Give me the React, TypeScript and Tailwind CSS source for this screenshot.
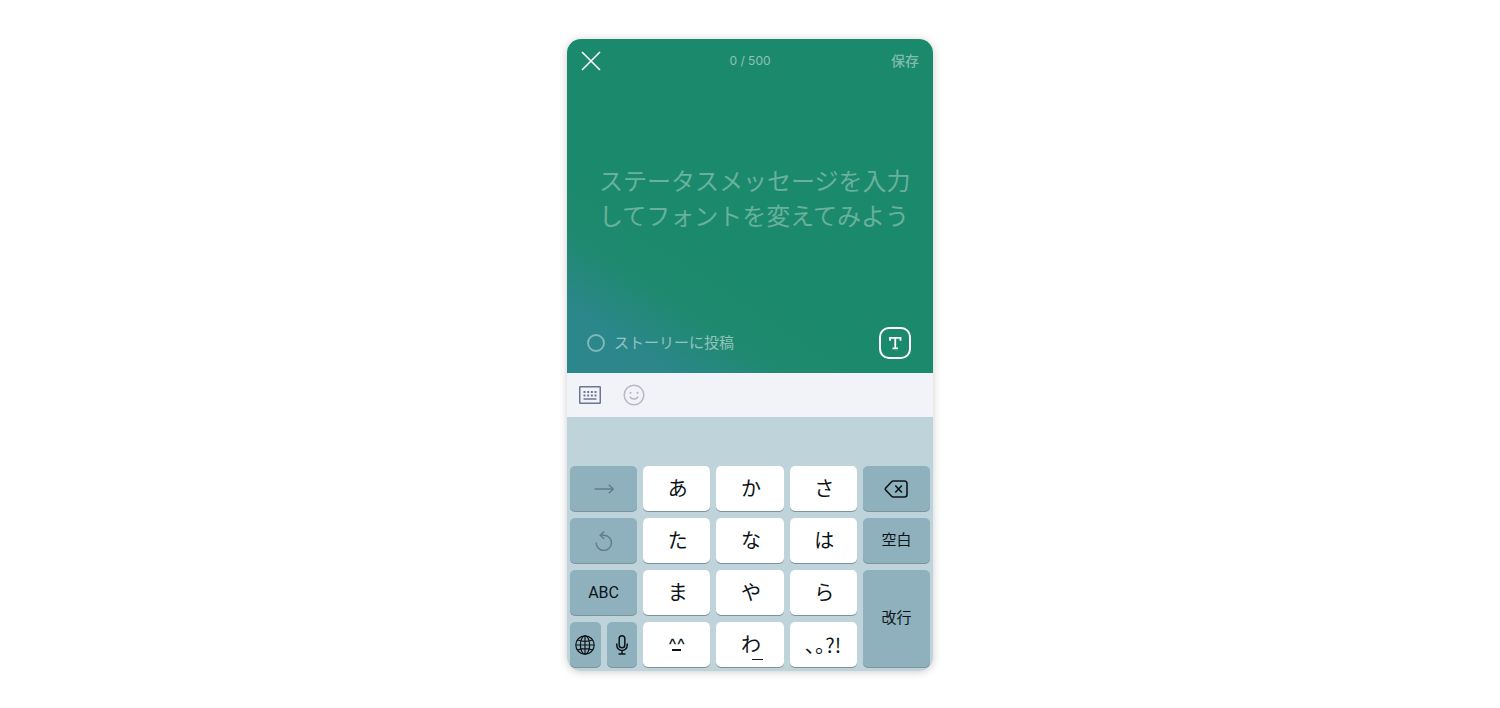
import { ReactNode, useState } from 'react';
import clsx from 'clsx';

const MAX_LENGTH = 500;

const CloseIcon = () => (
  <svg className="w-5 h-5" viewBox="0 0 20 20" fill="none" stroke="currentColor" strokeWidth={1.6}>
    <path d="M1 1l18 18M19 1L1 19" />
  </svg>
);

const FontIcon = () => (
  <svg className="w-8 h-8" viewBox="0 0 32 32" fill="none" stroke="currentColor">
    <rect x="1" y="1" width="30" height="30" rx="9" strokeWidth={2} />
    <path d="M11 13.800v-3h10.500v3M16.250 10.800v10.500M13.500 21.300h5.500" strokeWidth={1.8} />
  </svg>
);

const KeyboardIcon = () => (
  <svg className="w-[22px] h-[18px]" viewBox="0 0 22 18" fill="none" stroke="currentColor" strokeWidth={1.5}>
    <rect x="0.750" y="0.750" width="20.500" height="16.500" rx="0.500" />
    <path d="M4.500 6h13M4.500 9.500h13" strokeWidth={1.8} strokeDasharray="2 1.670" />
    <path d="M4.500 13h13" />
  </svg>
);

const SmileIcon = () => (
  <svg className="w-[22px] h-[22px]" viewBox="0 0 22 22" fill="none" stroke="currentColor" strokeWidth={1.5}>
    <circle cx="11" cy="11" r="9.800" />
    <path d="M7 12.500c1 3.200 7 3.200 8 0" />
    <circle cx="7.500" cy="8.800" r="1.100" fill="currentColor" stroke="none" />
    <circle cx="14.500" cy="8.800" r="1.100" fill="currentColor" stroke="none" />
  </svg>
);

const ArrowIcon = () => (
  <svg className="w-5 h-5" viewBox="0 0 20 20" fill="none" stroke="currentColor" strokeWidth={1.5}>
    <path d="M0.500 10h18.500M14.800 5.800l4.500 4.200-4.500 4.200" />
  </svg>
);

const UndoIcon = () => (
  <svg className="w-5 h-5" viewBox="0 0 20 20" fill="none" stroke="currentColor" strokeWidth={1.5}>
    <path d="M2.200 11.500a7.600 7.600 0 1 0 7.600-7.300H6.500M10.200 0.500L6.200 4.200l4 3.800" />
  </svg>
);

const DeleteIcon = () => (
  <svg className="w-6 h-[18px]" viewBox="0 0 24 18" fill="none" stroke="currentColor" strokeWidth={1.6} strokeLinejoin="round">
    <path d="M9.300 1h11.200a2.500 2.500 0 0 1 2.500 2.500v11a2.500 2.500 0 0 1-2.500 2.500h-11.200q-1 0-1.700-.7L1.700 10q-.8-1 0-2l5.900-6.300q.7-.7 1.700-.7z" />
    <path d="M11.300 5.500l6.600 7M17.900 5.500l-6.600 7" />
  </svg>
);

const GlobeIcon = () => (
  <svg className="w-5 h-5" viewBox="0 0 20 20" fill="none" stroke="currentColor" strokeWidth={1.2}>
    <circle cx="10" cy="10" r="9.200" />
    <ellipse cx="10" cy="10" rx="4.600" ry="9.200" />
    <path d="M10 0.800v18.400M0.800 10h18.400M2.500 5c4.500 1.600 10.500 1.600 15 0M2.500 15c4.500-1.600 10.500-1.600 15 0" />
  </svg>
);

const MicIcon = () => (
  <svg className="w-3 h-5" viewBox="0 0 12 20" fill="none" stroke="currentColor" strokeWidth={1.5}>
    <rect x="3.200" y="0.800" width="5.600" height="12" rx="2.800" />
    <path d="M0.800 8.500v1.800a5.200 5.200 0 0 0 10.400 0V8.500M6 15.500v3.500M2.500 19h7" />
  </svg>
);

type KeyProps = {
  children: ReactNode;
  label?: string;
  dark?: boolean;
  className?: string;
  onClick?: () => void;
};

const Key = ({ children, label, dark, className, onClick }: KeyProps) => (
  <button
    type="button"
    aria-label={label}
    onClick={onClick}
    className={clsx(
      'flex min-w-0 items-center justify-center rounded-[5px] shadow-[0_1px_0_#7d929b]',
      dark ? 'bg-[#8fb1be]' : 'bg-white text-[20px]',
      className
    )}
  >
    {children}
  </button>
);

export default function App() {
  const [message, setMessage] = useState('');

  const type = (text: string) => setMessage((prev) => (prev + text).slice(0, MAX_LENGTH));

  const kana = (char: string) => (
    <Key onClick={() => type(char)}>
      <span className="pl-[2px]">{char}</span>
    </Key>
  );

  return (
    <div
      lang="ja"
      className="flex min-h-screen items-start justify-center bg-white py-[39px] font-['Inter','Noto_Sans_CJK_JP',sans-serif] text-[#0d1418]"
    >
      <main className="w-full max-w-[366px] overflow-hidden rounded-[14px] shadow-[0_1px_8px_rgba(0,0,0,0.2)]">
        {/* Message editor */}
        <section className="flex flex-col bg-[linear-gradient(33deg,#2c878c_0%,#2b878a_12%,#1f896f_25%,#1b896b_36%)] text-white">
          <header className="grid grid-cols-3 items-center px-[14px] pt-3">
            <button type="button" aria-label="閉じる" className="justify-self-start">
              <CloseIcon />
            </button>
            <span className="text-center text-[12px] leading-5 text-white/50">
              {message.length} / {MAX_LENGTH}
            </span>
            <button type="button" className="justify-self-end text-[14px] leading-5 font-medium text-white/45">
              保存
            </button>
          </header>

          <textarea
            aria-label="ステータスメッセージ"
            value={message}
            maxLength={MAX_LENGTH}
            onChange={(e) => setMessage(e.target.value)}
            placeholder="ステータスメッセージを入力してフォントを変えてみよう"
            className="mt-[93px] h-[70px] w-full resize-none overflow-hidden bg-transparent pr-3 pl-8 text-[24px] leading-[35px] outline-none placeholder:text-white/35"
          />

          <div className="flex items-center justify-between pt-[93px] pr-[22px] pb-[14px] pl-5">
            <label className="flex items-center gap-[9px] text-[15px] leading-5 text-white/50">
              <input
                type="checkbox"
                className="h-[18px] w-[18px] appearance-none rounded-full border-2 border-white/40 checked:bg-white/80"
              />
              ストーリーに投稿
            </label>
            <button type="button" aria-label="フォント">
              <FontIcon />
            </button>
          </div>
        </section>

        {/* Input switcher */}
        <nav className="flex h-11 items-center gap-[22px] bg-[#f1f3f8] px-3">
          <button type="button" aria-label="キーボード" className="text-[#6c7595]">
            <KeyboardIcon />
          </button>
          <button type="button" aria-label="スタンプ" className="text-[#b7bac1]">
            <SmileIcon />
          </button>
        </nav>

        {/* Flick keyboard */}
        <section className="bg-[#bfd4da] px-[3px] pt-[49px] pb-1">
          <div className="grid auto-rows-[45px] grid-cols-5 gap-x-[6px] gap-y-[7px]">
            <Key dark label="次の文字" className="text-[#5f7f89]">
              <ArrowIcon />
            </Key>
            {kana('あ')}
            {kana('か')}
            {kana('さ')}
            <Key dark label="削除" onClick={() => setMessage((prev) => prev.slice(0, -1))}>
              <DeleteIcon />
            </Key>

            <Key dark label="元に戻す" className="text-[#5f7f89]">
              <UndoIcon />
            </Key>
            {kana('た')}
            {kana('な')}
            {kana('は')}
            <Key dark className="text-[15px]" onClick={() => type(' ')}>
              空白
            </Key>

            <Key dark className="font-['Roboto',sans-serif] text-[16px]">
              ABC
            </Key>
            {kana('ま')}
            {kana('や')}
            {kana('ら')}
            <Key dark className="row-span-2 text-[15px]" onClick={() => type('\n')}>
              改行
            </Key>

            <div className="grid grid-cols-2 gap-[6px]">
              <Key dark label="地球儀">
                <GlobeIcon />
              </Key>
              <Key dark label="音声入力">
                <MicIcon />
              </Key>
            </div>
            <Key onClick={() => type('^^')}>
              <span className="relative text-[18px] leading-5">
                ^^
                <span className="absolute bottom-1 left-1 h-[2px] w-[9px] bg-current" />
              </span>
            </Key>
            <Key onClick={() => type('わ')}>
              <span className="relative pl-[2px]">
                わ
                <span className="absolute right-[-2px] bottom-0 h-px w-[11px] bg-current" />
              </span>
            </Key>
            <Key onClick={() => type('、')}>
              <span className="font-['Noto_Sans_CJK_JP',sans-serif]">､｡?!</span>
            </Key>
          </div>
        </section>
      </main>
    </div>
  );
}
